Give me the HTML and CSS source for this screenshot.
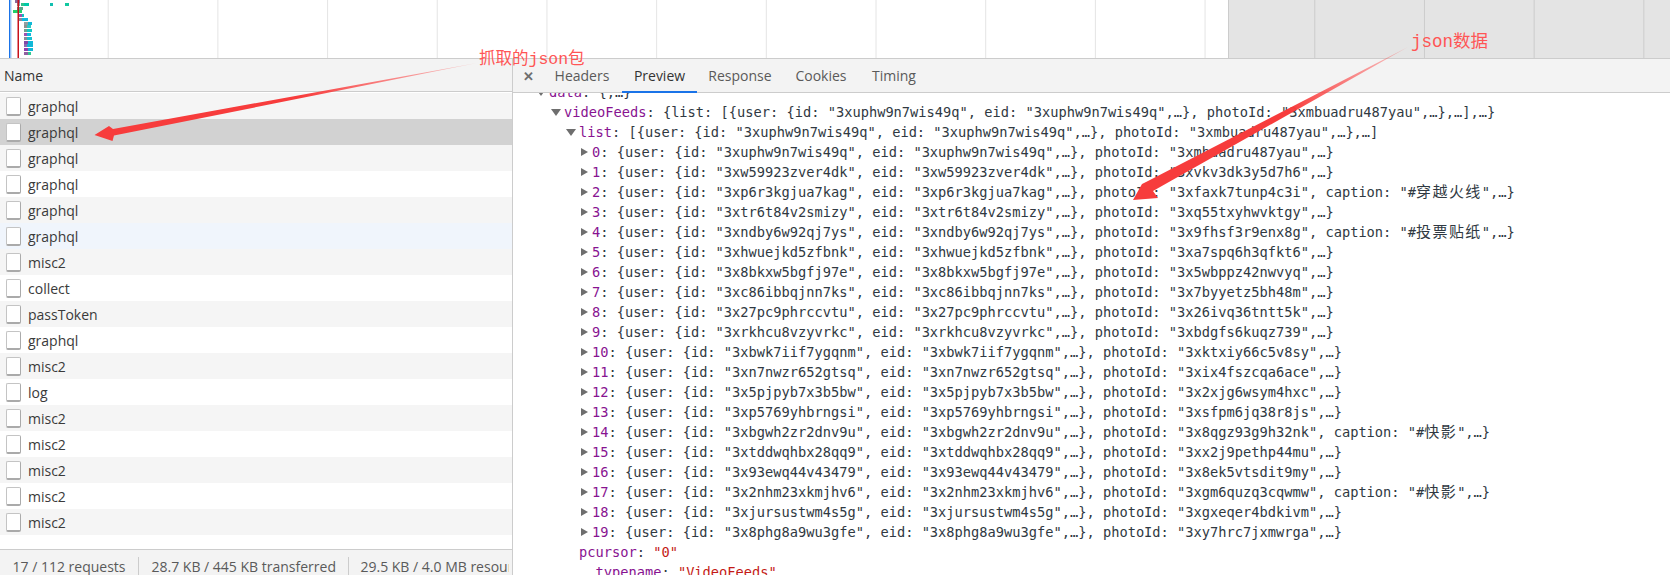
FILE: index.html
```html
<!DOCTYPE html>
<html lang="en">
<head>
    <meta charset="UTF-8">
    <title>Network panel</title>
    <link rel="stylesheet" href="styles.css">
</head>
<body>
    <div class="timeline">
        <svg class="waterfall" width="120" height="58">
            <rect x="9" y="0" width="1.5" height="58" fill="#1a73e8"/>
            <rect x="10.5" y="0" width="1" height="58" fill="#a9cdf5"/>
            <rect x="15" y="0" width="5" height="3" fill="#8a6a9a"/>
            <rect x="17" y="3" width="3" height="3" fill="#9a9a9a"/>
            <rect x="21" y="3" width="3" height="3" fill="#2fc48d"/>
            <rect x="24" y="3" width="5" height="3" fill="#00c8a8"/>
            <rect x="50" y="3" width="3" height="3" fill="#12bfb0"/>
            <rect x="65" y="3" width="4" height="3" fill="#12c8a0"/>
            <rect x="17" y="7" width="6" height="3" fill="#5aa58c"/>
            <rect x="13" y="10" width="9" height="3" fill="#1fcf6a"/>
            <rect x="19" y="14" width="3" height="3" fill="#a050b0"/>
            <rect x="22" y="14" width="2" height="3" fill="#10c0c0"/>
            <rect x="19" y="18" width="3" height="3" fill="#8a8a9a"/>
            <rect x="22" y="18" width="6" height="3" fill="#10b8e0"/>
            <g class="bars">
                <rect x="24" y="22" width="4" height="3" fill="#8fa0a0"/>
                <rect x="28" y="22" width="4" height="3" fill="#10b8d8"/>
                <rect x="24" y="25" width="3" height="3" fill="#909090"/>
                <rect x="27" y="25" width="4" height="3" fill="#30c8c0"/>
                <rect x="24" y="29" width="3" height="3" fill="#70a090"/>
                <rect x="27" y="29" width="5" height="3" fill="#10c8c8"/>
                <rect x="24" y="33" width="3" height="3" fill="#a050b0"/>
                <rect x="27" y="33" width="4" height="3" fill="#10b8e0"/>
                <rect x="24" y="37" width="3" height="3" fill="#8a8a9a"/>
                <rect x="27" y="37" width="5" height="3" fill="#18c0d0"/>
                <rect x="24" y="41" width="4" height="3" fill="#804aa8"/>
                <rect x="28" y="41" width="5" height="3" fill="#10b8d8"/>
                <rect x="24" y="44" width="3" height="3" fill="#8a6ab0"/>
                <rect x="27" y="44" width="6" height="3" fill="#10b8d8"/>
                <rect x="24" y="48" width="4" height="3" fill="#9040b0"/>
                <rect x="28" y="48" width="5" height="3" fill="#10b8d8"/>
                <rect x="24" y="52" width="4" height="3" fill="#9060a0"/>
                <rect x="28" y="52" width="3" height="3" fill="#30c890"/>
            </g>
            <rect x="17.5" y="0" width="1.5" height="58" fill="#c8111a"/>
        </svg>
        <div class="timeline-dim"></div>
    </div>

    <div class="panel">
        <div class="requests">
            <div class="requests-head">Name</div>
            <ul class="request-list">
                <li><i class="file"></i>graphql</li>
                <li class="selected"><i class="file"></i>graphql</li>
                <li><i class="file"></i>graphql</li>
                <li><i class="file"></i>graphql</li>
                <li><i class="file"></i>graphql</li>
                <li class="hovered"><i class="file"></i>graphql</li>
                <li><i class="file"></i>misc2</li>
                <li><i class="file"></i>collect</li>
                <li><i class="file"></i>passToken</li>
                <li><i class="file"></i>graphql</li>
                <li><i class="file"></i>misc2</li>
                <li><i class="file"></i>log</li>
                <li><i class="file"></i>misc2</li>
                <li><i class="file"></i>misc2</li>
                <li><i class="file"></i>misc2</li>
                <li><i class="file"></i>misc2</li>
                <li><i class="file"></i>misc2</li>
            </ul>
            <div class="status">
                <span>17 / 112 requests</span>
                <span>28.7 KB / 445 KB transferred</span>
                <span>29.5 KB / 4.0 MB resources</span>
            </div>
        </div>

        <div class="details">
            <div class="tabs">
                <span class="close">&#10005;</span>
                <span class="tab tab-headers">Headers</span>
                <span class="tab tab-preview active">Preview</span>
                <span class="tab tab-response">Response</span>
                <span class="tab tab-cookies">Cookies</span>
                <span class="tab tab-timing">Timing</span>
            </div>
            <div class="tree-view">
                <div class="tree">
                    <div class="line lvl-1"><i class="open"></i><b>data</b>: {,…}</div>
                    <div class="line lvl-2"><i class="open"></i><b>videoFeeds</b>: {list: [{user: {id: "3xuphw9n7wis49q", eid: "3xuphw9n7wis49q",…}, photoId: "3xmbuadru487yau",…},…],…}</div>
                    <div class="line lvl-3"><i class="open"></i><b>list</b>: [{user: {id: "3xuphw9n7wis49q", eid: "3xuphw9n7wis49q",…}, photoId: "3xmbuadru487yau",…},…]</div>
                    <div class="line lvl-4"><i class="shut"></i><b>0</b>: {user: {id: "3xuphw9n7wis49q", eid: "3xuphw9n7wis49q",…}, photoId: "3xmbuadru487yau",…}</div>
                    <div class="line lvl-4"><i class="shut"></i><b>1</b>: {user: {id: "3xw59923zver4dk", eid: "3xw59923zver4dk",…}, photoId: "3xvkv3dk3y5d7h6",…}</div>
                    <div class="line lvl-4"><i class="shut"></i><b>2</b>: {user: {id: "3xp6r3kgjua7kag", eid: "3xp6r3kgjua7kag",…}, photoId: "3xfaxk7tunp4c3i", caption: "#<span class="cjk">穿越火线</span>",…}</div>
                    <div class="line lvl-4"><i class="shut"></i><b>3</b>: {user: {id: "3xtr6t84v2smizy", eid: "3xtr6t84v2smizy",…}, photoId: "3xq55txyhwvktgy",…}</div>
                    <div class="line lvl-4"><i class="shut"></i><b>4</b>: {user: {id: "3xndby6w92qj7ys", eid: "3xndby6w92qj7ys",…}, photoId: "3x9fhsf3r9enx8g", caption: "#<span class="cjk">投票贴纸</span>",…}</div>
                    <div class="line lvl-4"><i class="shut"></i><b>5</b>: {user: {id: "3xhwuejkd5zfbnk", eid: "3xhwuejkd5zfbnk",…}, photoId: "3xa7spq6h3qfkt6",…}</div>
                    <div class="line lvl-4"><i class="shut"></i><b>6</b>: {user: {id: "3x8bkxw5bgfj97e", eid: "3x8bkxw5bgfj97e",…}, photoId: "3x5wbppz42nwvyq",…}</div>
                    <div class="line lvl-4"><i class="shut"></i><b>7</b>: {user: {id: "3xc86ibbqjnn7ks", eid: "3xc86ibbqjnn7ks",…}, photoId: "3x7byyetz5bh48m",…}</div>
                    <div class="line lvl-4"><i class="shut"></i><b>8</b>: {user: {id: "3x27pc9phrccvtu", eid: "3x27pc9phrccvtu",…}, photoId: "3x26ivq36tntt5k",…}</div>
                    <div class="line lvl-4"><i class="shut"></i><b>9</b>: {user: {id: "3xrkhcu8vzyvrkc", eid: "3xrkhcu8vzyvrkc",…}, photoId: "3xbdgfs6kuqz739",…}</div>
                    <div class="line lvl-4"><i class="shut"></i><b>10</b>: {user: {id: "3xbwk7iif7ygqnm", eid: "3xbwk7iif7ygqnm",…}, photoId: "3xktxiy66c5v8sy",…}</div>
                    <div class="line lvl-4"><i class="shut"></i><b>11</b>: {user: {id: "3xn7nwzr652gtsq", eid: "3xn7nwzr652gtsq",…}, photoId: "3xix4fszcqa6ace",…}</div>
                    <div class="line lvl-4"><i class="shut"></i><b>12</b>: {user: {id: "3x5pjpyb7x3b5bw", eid: "3x5pjpyb7x3b5bw",…}, photoId: "3x2xjg6wsym4hxc",…}</div>
                    <div class="line lvl-4"><i class="shut"></i><b>13</b>: {user: {id: "3xp5769yhbrngsi", eid: "3xp5769yhbrngsi",…}, photoId: "3xsfpm6jq38r8js",…}</div>
                    <div class="line lvl-4"><i class="shut"></i><b>14</b>: {user: {id: "3xbgwh2zr2dnv9u", eid: "3xbgwh2zr2dnv9u",…}, photoId: "3x8qgz93g9h32nk", caption: "#<span class="cjk">快影</span>",…}</div>
                    <div class="line lvl-4"><i class="shut"></i><b>15</b>: {user: {id: "3xtddwqhbx28qq9", eid: "3xtddwqhbx28qq9",…}, photoId: "3xx2j9pethp44mu",…}</div>
                    <div class="line lvl-4"><i class="shut"></i><b>16</b>: {user: {id: "3x93ewq44v43479", eid: "3x93ewq44v43479",…}, photoId: "3x8ek5vtsdit9my",…}</div>
                    <div class="line lvl-4"><i class="shut"></i><b>17</b>: {user: {id: "3x2nhm23xkmjhv6", eid: "3x2nhm23xkmjhv6",…}, photoId: "3xgm6quzq3cqwmw", caption: "#<span class="cjk">快影</span>",…}</div>
                    <div class="line lvl-4"><i class="shut"></i><b>18</b>: {user: {id: "3xjursustwm4s5g", eid: "3xjursustwm4s5g",…}, photoId: "3xgxeqer4bdkivm",…}</div>
                    <div class="line lvl-4"><i class="shut"></i><b>19</b>: {user: {id: "3x8phg8a9wu3gfe", eid: "3x8phg8a9wu3gfe",…}, photoId: "3xy7hrc7jxmwrga",…}</div>
                    <div class="line plain"><b>pcursor</b>: <em>"0"</em></div>
                    <div class="line plain"><b>__typename</b>: <em>"VideoFeeds"</em></div>
                </div>
            </div>
        </div>
    </div>

    <!-- red annotations drawn on top of the screenshot -->
    <svg class="marks" width="1670" height="575">
        <defs>
            <linearGradient id="fade-a" gradientUnits="userSpaceOnUse" x1="477" y1="63" x2="300" y2="98">
                <stop offset="0" stop-color="#ff4040" stop-opacity="0.25"/>
                <stop offset="1" stop-color="#f73c3c"/>
            </linearGradient>
            <linearGradient id="fade-b" gradientUnits="userSpaceOnUse" x1="1408" y1="47" x2="1290" y2="112">
                <stop offset="0" stop-color="#ff4040" stop-opacity="0.25"/>
                <stop offset="1" stop-color="#f73c3c"/>
            </linearGradient>
        </defs>
        <polygon fill="url(#fade-a)" points="477,63 113,129 109,126 94.5,135 112.5,141 114,135.5"/>
        <polygon fill="url(#fade-b)" points="1408,47 1148,181 1142,184 1133,200 1158,198 1153,191"/>
    </svg>
    <div class="note note-package">抓取的json包</div>
    <div class="note note-data">json数据</div>
</body>
</html>
```

FILE: styles.css
```css
* {
    box-sizing: border-box;
}

html, body {
    margin: 0;
    height: 575px;
    overflow: hidden;
}

body {
    position: relative;
    font-family: "Open Sans", "Liberation Sans", sans-serif;
    color: #333;
    background: #fff;
}

/* overview strip */
.timeline {
    position: relative;
    height: 58px;
    background-color: #fff;
    background-image: linear-gradient(to right, transparent 107.2px, #e4e4e4 107.2px, #e4e4e4 108.8px, transparent 108.8px);
    background-size: 109.7px 100%;
}

.waterfall {
    display: block;
}

.timeline-dim {
    position: absolute;
    top: 0;
    bottom: 0;
    left: 1228px;
    right: 0;
    background: rgba(0, 0, 0, 0.105);
    border-left: 1px solid #ccc;
}

.panel {
    display: flex;
    height: 517px;
    border-top: 1px solid #ccc;
}

/* left pane */
.requests {
    display: flex;
    flex-direction: column;
    width: 513px;
    flex-shrink: 0;
    border-right: 1px solid #ccc;
    overflow: hidden;
}

.requests-head {
    height: 33px;
    line-height: 33px;
    padding-left: 4px;
    font-size: 14px;
    background: #f3f3f3;
    border-bottom: 1px solid #ccc;
}

.request-list {
    flex: 1;
    list-style: none;
    margin: 0;
    padding: 1px 0 0;
}

.request-list li {
    display: flex;
    align-items: center;
    height: 26px;
    font-size: 14px;
    color: #3a3a3a;
}

.request-list li:nth-child(odd) {
    background: #f5f5f5;
}

.request-list li.selected {
    background: #d2d2d2;
}

.request-list li.hovered {
    background: #f0f5fc;
}

.file {
    width: 15px;
    height: 19px;
    margin: 0 7px 0 6px;
    background: #fff;
    border: 1px solid #c4c4c4;
    border-right-color: #aaa;
    border-bottom: 2px solid #aaa;
    border-radius: 2px;
}

.status {
    display: flex;
    height: 26px;
    padding-top: 7px;
    font-size: 14px;
    line-height: 20px;
    color: #5a5a5a;
    background: #f3f3f3;
    border-top: 1px solid #ccc;
    white-space: nowrap;
}

.status span {
    height: 22px;
    padding: 0 12.5px;
    flex-shrink: 0;
    border-right: 1px solid #ccc;
}

.status span:last-child {
    width: 149px;
    margin-left: 11px;
    padding: 0;
    border-right: 0;
    overflow: hidden;
}

/* right pane */
.details {
    flex: 1;
    min-width: 0;
}

.tabs {
    display: flex;
    height: 34px;
    background: #f3f3f3;
    border-bottom: 1px solid #ccc;
    font-size: 14px;
    color: #5a5a5a;
}

.close {
    width: 36px;
    padding: 8px 0 0 10px;
    font-size: 13px;
    font-weight: bold;
    color: #6e6e6e;
}

.tab {
    line-height: 34px;
    text-align: center;
}

.tab-headers {
    width: 73px;
    padding-right: 7px;
}

.tab-preview {
    width: 75px;
}

.tab-response {
    width: 86px;
}

.tab-cookies {
    width: 76px;
}

.tab-timing {
    width: 70px;
}

.tab.active {
    color: #333;
    height: 34px;
    border-bottom: 2px solid #1a73e8;
}

.tree-view {
    height: 483px;
    overflow: hidden;
}

.tree {
    margin-top: -11px;
    font-family: "DejaVu Sans Mono", monospace;
    font-size: 13.7px;
    line-height: 20px;
    color: #303942;
    white-space: nowrap;
}

.line {
    height: 20px;
}

.line b {
    font-weight: normal;
    color: #881391;
}

.line em {
    font-style: normal;
    color: #c41a16;
}

.line i {
    display: inline-block;
    vertical-align: middle;
    margin-top: -2px;
}

.lvl-1 {
    padding-left: 23px;
}

.lvl-2 {
    padding-left: 38px;
}

.lvl-3 {
    padding-left: 53px;
}

.lvl-4 {
    padding-left: 68px;
}

.plain {
    padding-left: 66px;
}

.open {
    width: 0;
    height: 0;
    margin-right: 3px;
    border-left: 5px solid transparent;
    border-right: 5px solid transparent;
    border-top: 7px solid #6e6e6e;
}

.shut {
    width: 0;
    height: 0;
    margin-right: 4px;
    border-top: 4.5px solid transparent;
    border-bottom: 4.5px solid transparent;
    border-left: 7px solid #6e6e6e;
}

.cjk {
    font-family: "Noto Sans CJK SC", sans-serif;
    font-size: 15px;
    line-height: 1;
    letter-spacing: 1.4px;
}

/* annotations */
.marks {
    position: absolute;
    top: 0;
    left: 0;
    pointer-events: none;
}

.note {
    position: absolute;
    font-family: "Liberation Mono", "Noto Sans CJK SC", monospace;
    font-size: 16.5px;
    line-height: 20px;
    color: #ff5555;
    white-space: nowrap;
}

.note-package {
    left: 479px;
    top: 50px;
}

.note-data {
    left: 1411px;
    top: 32px;
    font-size: 17.5px;
}
```
